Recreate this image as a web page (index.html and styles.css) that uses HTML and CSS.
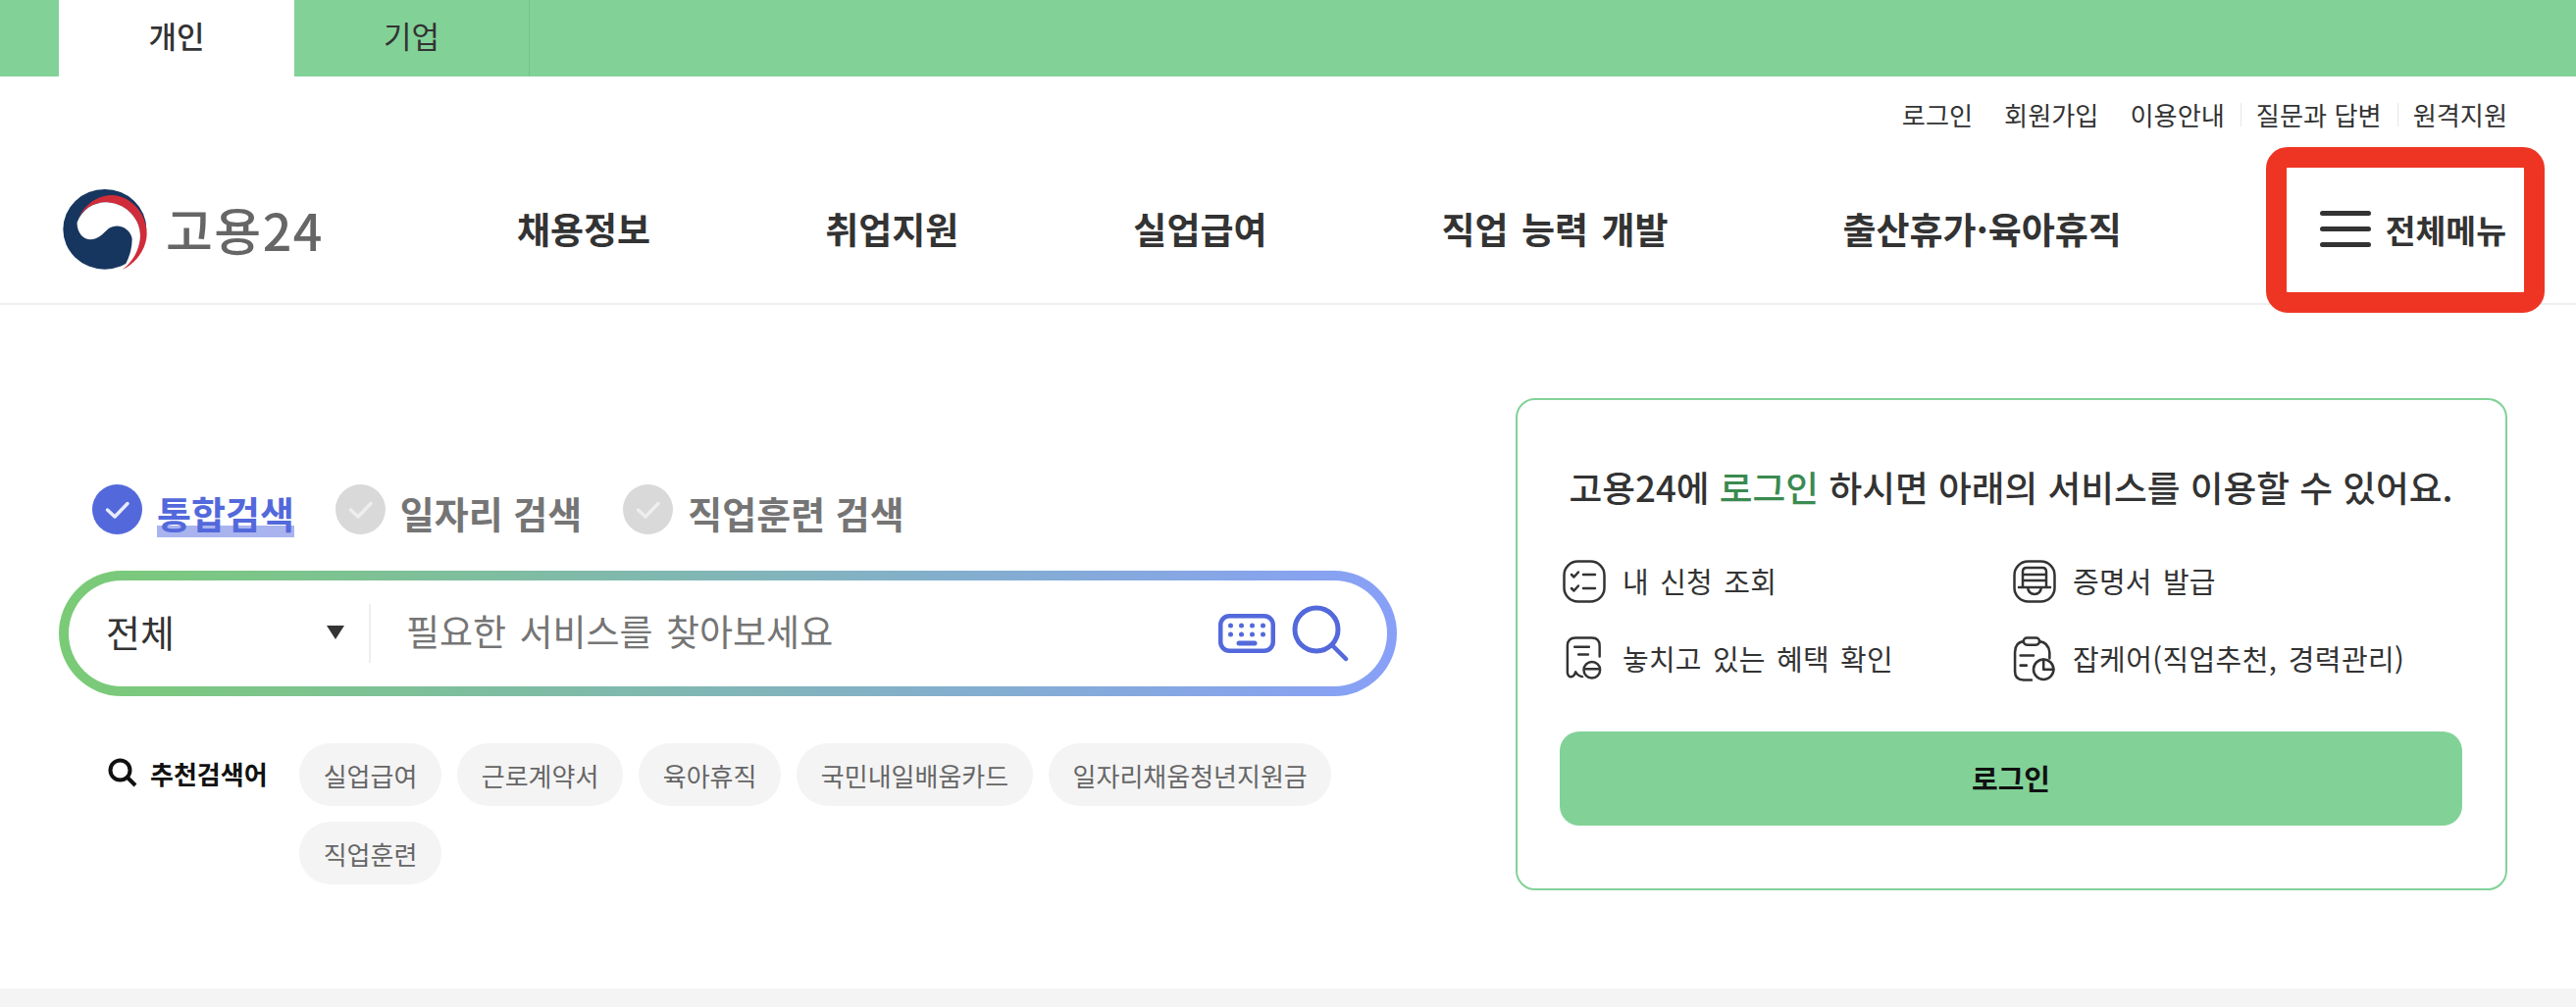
FILE: index.html
```html
<!DOCTYPE html>
<html lang="ko">
<head>
<meta charset="utf-8">
<title>고용24</title>
<link rel="stylesheet" href="styles.css">
</head>
<body>
<div class="topbar">
  <a class="top-tab active">개인</a>
  <a class="top-tab">기업</a>
</div>
<ul class="util">
  <li>로그인</li>
  <li>회원가입</li>
  <li>이용안내</li>
  <li class="sep">질문과 답변</li>
  <li class="sep">원격지원</li>
</ul>
<header class="header">
  <a class="logo">
    <svg class="logo-mark" viewBox="27 25 255 245" aria-hidden="true">
      <ellipse cx="154" cy="147" rx="127" ry="122" fill="#17365f"/>
      <path d="M72 112C95 70 135 42 175 43C235 45 282 100 282 160C282 205 250 250 208 270C240 240 262 205 262 165C262 120 225 70 165 65C125 62 90 85 72 112Z" fill="#d12c39"/>
      <path d="M70 125C85 85 125 62 165 65C225 70 262 120 262 165C262 205 240 245 210 268C228 235 238 205 237 175C232 145 195 125 165 145C150 158 135 178 108 178C85 178 67 150 70 125Z" fill="#fff"/>
    </svg>
    <span class="logo-text">고용24</span>
  </a>
  <nav class="gnb">
    <a>채용정보</a>
    <a>취업지원</a>
    <a>실업급여</a>
    <a>직업 능력 개발</a>
    <a>출산휴가·육아휴직</a>
  </nav>
  <button class="all-menu">
    <span class="burger"><i></i><i></i><i></i></span>
    <span>전체메뉴</span>
    <span class="highlight"></span>
  </button>
</header>
<main class="main">
  <section class="search-col">
    <div class="scope">
      <div class="scope-item on">
        <svg class="radio" viewBox="0 0 51 51"><circle cx="25.500" cy="25.500" r="25.500"/><path d="M15.500 26l7.500 7 13-13.500"/></svg>
        <span class="scope-label">통합검색</span>
      </div>
      <div class="scope-item">
        <svg class="radio" viewBox="0 0 51 51"><circle cx="25.500" cy="25.500" r="25.500"/><path d="M15.500 26l7.500 7 13-13.500"/></svg>
        <span class="scope-label">일자리 검색</span>
      </div>
      <div class="scope-item">
        <svg class="radio" viewBox="0 0 51 51"><circle cx="25.500" cy="25.500" r="25.500"/><path d="M15.500 26l7.500 7 13-13.500"/></svg>
        <span class="scope-label">직업훈련 검색</span>
      </div>
    </div>
    <div class="searchbar">
      <div class="search-inner">
        <div class="select"><span class="select-text">전체</span><i class="caret"></i></div>
        <span class="placeholder">필요한 서비스를 찾아보세요</span>
        <svg class="kbd" viewBox="0 0 58 40" aria-hidden="true">
          <rect x="2.250" y="2.250" width="53.500" height="35.500" rx="9" fill="none" stroke="#5369db" stroke-width="4.500"/>
          <g fill="#5369db"><circle cx="12.500" cy="12" r="2.500"/><circle cx="23.500" cy="12" r="2.500"/><circle cx="34.500" cy="12" r="2.500"/><circle cx="45.500" cy="12" r="2.500"/><circle cx="12.500" cy="21" r="2.500"/><circle cx="23.500" cy="21" r="2.500"/><circle cx="34.500" cy="21" r="2.500"/><circle cx="45.500" cy="21" r="2.500"/></g>
          <path d="M21 30H37" stroke="#5369db" stroke-width="5" stroke-linecap="round"/>
        </svg>
        <svg class="mag" viewBox="0 0 58 58" aria-hidden="true">
          <circle cx="25" cy="25" r="22" fill="none" stroke="#5369db" stroke-width="5"/>
          <path d="M41 41L55 55" stroke="#5369db" stroke-width="4.500" stroke-linecap="round"/>
        </svg>
      </div>
    </div>
    <div class="reco">
      <div class="reco-label">
        <svg class="reco-icon" viewBox="0 0 30 30" aria-hidden="true">
          <circle cx="12.500" cy="12.500" r="10" fill="none" stroke="#111" stroke-width="4"/>
          <path d="M19.500 19.500L28 28" stroke="#111" stroke-width="4"/>
        </svg>
        <span>추천검색어</span>
      </div>
      <div class="chips">
        <a class="chip">실업급여</a>
        <a class="chip">근로계약서</a>
        <a class="chip">육아휴직</a>
        <a class="chip">국민내일배움카드</a>
        <a class="chip">일자리채움청년지원금</a>
        <a class="chip">직업훈련</a>
      </div>
    </div>
  </section>
  <aside class="card">
    <h2 class="card-title">고용24에 <em>로그인</em> 하시면 아래의 서비스를 이용할 수 있어요.</h2>
    <ul class="services">
      <li>
        <svg class="svc" viewBox="0 0 44 44" aria-hidden="true">
          <rect x="1.500" y="1.500" width="41" height="41" rx="14"/>
          <path d="M9 15l2.500 2.500L16 12.500M21 15H33M9 29l2.500 2.500L16 26.500M21 29H33"/>
        </svg>
        <span>내 신청 조회</span>
      </li>
      <li>
        <svg class="svc" viewBox="0 0 44 44" aria-hidden="true">
          <rect x="1.500" y="1.500" width="41" height="41" rx="14"/>
          <path d="M10 28V12Q10 8 14 8H30Q34 8 34 12V28M10 15H34M10 21H34M6 28H38M15 28Q16 35 22 35Q28 35 29 28"/>
        </svg>
        <span>증명서 발급</span>
      </li>
      <li>
        <svg class="svc" viewBox="0 0 38 47" aria-hidden="true">
          <path d="M1.500 38V10Q1.500 1.500 10 1.500H27Q35 1.500 35 10V21M1.500 38Q2.500 43 6 42Q9 41 10 37Q12 41 17 42M9 11H24M13 19H23M19 34H35"/>
          <circle cx="27" cy="35" r="8.500"/>
        </svg>
        <span>놓치고 있는 혜택 확인</span>
      </li>
      <li>
        <svg class="svc" viewBox="0 0 42 45" aria-hidden="true">
          <path d="M10 5Q1.500 6 1.500 16V35Q1.500 43.500 10 43.500H18M26 5Q35 6 36 16V22M7 19H20M7 29H13M30 23V33H40"/>
          <rect x="10" y="1.500" width="16" height="7" rx="3.500"/>
          <circle cx="30" cy="33" r="10"/>
        </svg>
        <span class="svc-wide">잡케어(직업추천, 경력관리)</span>
      </li>
    </ul>
    <button class="login">로그인</button>
  </aside>
</main>
<div class="band"></div>
</body>
</html>
```

FILE: styles.css
```css
* { box-sizing: border-box; }
html, body { margin: 0; padding: 0; }
body {
  width: 2626px;
  height: 1027px;
  overflow: hidden;
  background: #fff;
  color: #333;
  font-family: "Noto Sans CJK KR", "Noto Sans", sans-serif;
  display: flex;
  flex-direction: column;
}
a { color: inherit; text-decoration: none; }
ul { list-style: none; margin: 0; padding: 0; }
button { font-family: inherit; border: 0; background: none; padding: 0; color: inherit; }

.topbar {
  height: 78px;
  flex: none;
  background: #82d298;
  display: flex;
  padding-left: 60px;
}
.top-tab {
  width: 240px;
  display: flex;
  align-items: center;
  justify-content: center;
  font-size: 31px;
  color: #333;
  padding-bottom: 7px;
  border-right: 1px solid #72c48a;
}
.top-tab.active { background: #fff; border-right: 0; font-weight: 500; }

.util {
  height: 80px;
  flex: none;
  display: flex;
  justify-content: flex-end;
  align-items: center;
  padding: 0 70px 2px 0;
  font-size: 26.200px;
  line-height: 24px;
  color: #333;
}
.util li { margin-left: 32px; }
.util li.sep { margin-left: 16px; padding-left: 15px; border-left: 1px solid #e6e6e6; }

.header {
  height: 153px;
  flex: none;
  display: flex;
  align-items: center;
  border-bottom: 2px solid #eee;
  padding: 0 71px 0 64px;
}
.logo { display: flex; align-items: center; width: 463px; gap: 19px; }
.logo-mark { width: 86px; height: 82px; flex: none; }
.logo-text { font-size: 52px; font-weight: 500; color: #666; letter-spacing: 1.500px; line-height: 60px; }
.gnb { display: flex; gap: 178px; padding-bottom: 1px; font-size: 37px; word-spacing: 3px; font-weight: 700; color: #333; }
.all-menu {
  position: relative;
  margin-left: auto;
  display: flex;
  align-items: center;
  gap: 15px;
  height: 40px;
  font-size: 33.500px;
  font-weight: 700;
  color: #333;
}
.burger { display: flex; flex-direction: column; gap: 11px; }
.burger i { display: block; width: 52px; height: 5px; border-radius: 3px; background: #333; }
.highlight {
  position: absolute;
  left: -55px;
  right: -39px;
  top: -64px;
  bottom: -65px;
  border: 21px solid #ee3524;
  border-radius: 22px;
}

.main {
  flex: 1;
  display: flex;
  justify-content: space-between;
  padding: 0 70px 0 60px;
}
.search-col { width: 1364px; padding-top: 183px; }
.scope { display: flex; gap: 42px; padding-left: 34px; }
.scope-item { display: flex; gap: 15px; align-items: flex-start; height: 51px; }
.scope-label { font-size: 38px; font-weight: 700; color: #757575; line-height: 50px; margin-top: 4px; }
.radio { width: 51px; height: 51px; flex: none; }
.radio circle { fill: #d9d9d9; }
.radio path { fill: none; stroke: #eee; stroke-width: 3.500; stroke-linecap: round; stroke-linejoin: round; }
.scope-item.on .radio circle { fill: #5369db; }
.scope-item.on .radio path { stroke: #e8ebfb; }
.scope-item.on .scope-label {
  color: #5369db;
  background: linear-gradient(#a9b4ee, #a9b4ee) left bottom / 100% 12px no-repeat;
}

.searchbar {
  height: 128px;
  margin-top: 37px;
  padding: 10px;
  border-radius: 64px;
  background: linear-gradient(90deg, #7acb76, #88a0f8);
}
.search-inner {
  height: 108px;
  border-radius: 54px;
  background: #fff;
  display: flex;
  align-items: center;
  padding: 0 39px 0 38px;
}
.select {
  width: 270px;
  height: 60px;
  flex: none;
  display: flex;
  align-items: center;
  justify-content: space-between;
  padding-right: 25px;
  border-right: 2px solid #eee;
  font-size: 38px;
  color: #333;
}
.select-text { padding-bottom: 6px; }
.caret { width: 0; height: 0; margin-bottom: 2px; border-left: 9px solid transparent; border-right: 9px solid transparent; border-top: 14px solid #333; }
.placeholder { flex: 1; padding: 0 0 6px 36px; font-size: 37px; word-spacing: 3px; color: #757575; }
.kbd { width: 58px; height: 40px; flex: none; margin-right: 17px; }
.mag { width: 58px; height: 58px; flex: none; }

.reco { display: flex; margin-top: 48px; }
.reco-label {
  width: 245px;
  height: 60px;
  flex: none;
  display: flex;
  align-items: center;
  gap: 13px;
  padding-left: 50px;
  font-size: 26px;
  font-weight: 700;
  color: #111;
}
.reco-icon { width: 30px; height: 30px; flex: none; }
.chips { display: flex; flex-wrap: wrap; gap: 16px; width: 1100px; }
.chip {
  height: 64px;
  padding: 0 24.700px;
  border-radius: 32px;
  background: #f4f4f4;
  color: #666;
  font-size: 26px;
  display: flex;
  align-items: center;
}

.card {
  width: 1011px;
  height: 502px;
  margin-top: 95px;
  border: 2px solid #82d298;
  border-radius: 20px;
  padding: 58px 44px 0 43px;
}
.card-title {
  margin: 0;
  height: 60px;
  font-size: 36.700px;
  line-height: 60px;
  font-weight: 500;
  color: #333;
  text-align: center;
  white-space: nowrap;
}
.card-title em { font-style: normal; color: #3b8a50; }
.services {
  display: grid;
  grid-template-columns: 459px 1fr;
  row-gap: 35px;
  margin-top: 45px;
  padding-left: 3px;
}
.services li { display: flex; align-items: center; gap: 17px; height: 44px; font-size: 29px; word-spacing: 3px; letter-spacing: 0.200px; color: #333; }
.services li span { padding-bottom: 2px; }
.services li .svc-wide { letter-spacing: 0.400px; }
.svc { width: 44px; height: 46px; flex: none; overflow: visible; }
.svc * { fill: none; stroke: #333; stroke-width: 2.500; stroke-linecap: round; stroke-linejoin: round; }
.login {
  display: block;
  width: 100%;
  height: 96px;
  margin-top: 52px;
  padding-bottom: 3px;
  border-radius: 20px;
  background: #82d298;
  color: #111;
  font-size: 29px;
  font-weight: 700;
}

.band { height: 19px; flex: none; background: #f4f4f4; }
```
